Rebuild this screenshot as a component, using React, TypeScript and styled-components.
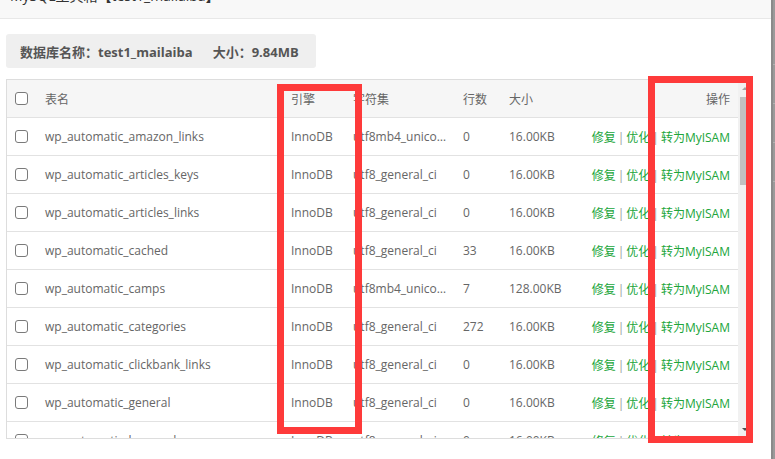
import React from 'react';
import styled, { createGlobalStyle } from 'styled-components';

type TableRow = {
  name: string;
  engine: string;
  charset: string;
  rows: number;
  size: string;
};

const data: TableRow[] = [
  { name: 'wp_automatic_amazon_links', engine: 'InnoDB', charset: 'utf8mb4_unicode_ci', rows: 0, size: '16.00KB' },
  { name: 'wp_automatic_articles_keys', engine: 'InnoDB', charset: 'utf8_general_ci', rows: 0, size: '16.00KB' },
  { name: 'wp_automatic_articles_links', engine: 'InnoDB', charset: 'utf8_general_ci', rows: 0, size: '16.00KB' },
  { name: 'wp_automatic_cached', engine: 'InnoDB', charset: 'utf8_general_ci', rows: 33, size: '16.00KB' },
  { name: 'wp_automatic_camps', engine: 'InnoDB', charset: 'utf8mb4_unicode_ci', rows: 7, size: '128.00KB' },
  { name: 'wp_automatic_categories', engine: 'InnoDB', charset: 'utf8_general_ci', rows: 272, size: '16.00KB' },
  { name: 'wp_automatic_clickbank_links', engine: 'InnoDB', charset: 'utf8_general_ci', rows: 0, size: '16.00KB' },
  { name: 'wp_automatic_general', engine: 'InnoDB', charset: 'utf8_general_ci', rows: 0, size: '16.00KB' },
  { name: 'wp_automatic_keywords', engine: 'InnoDB', charset: 'utf8_general_ci', rows: 0, size: '16.00KB' },
];

const GlobalStyle = createGlobalStyle`
  html, body {
    margin: 0;
    padding: 0;
  }
  body {
    font-family: "Open Sans", "Noto Sans CJK SC", sans-serif;
    background: #9a9a9a;
    overflow: hidden;
  }
`;

const App = () => {
  return (
    <>
      <GlobalStyle />
      <Page>
        <Dialog>
          <TitleBar>
            <TitleText>MySQL工具箱【test1_mailaiba】</TitleText>
          </TitleBar>
          <Body>
            <InfoBox>
              <span>数据库名称：test1_mailaiba</span>
              <InfoSize>大小：9.84MB</InfoSize>
            </InfoBox>
            <TableBox>
              <TableInner>
                <HeadRow>
                  <CheckCell><Checkbox /></CheckCell>
                  <Cell>表名</Cell>
                  <Cell>引擎</Cell>
                  <Cell>字符集</Cell>
                  <Cell>行数</Cell>
                  <Cell>大小</Cell>
                  <OpsCell $head>操作</OpsCell>
                </HeadRow>
                {data.map((r) => (
                  <Row key={r.name}>
                    <CheckCell><Checkbox /></CheckCell>
                    <Cell>{r.name}</Cell>
                    <Cell>{r.engine}</Cell>
                    <Cell>{r.charset}</Cell>
                    <Cell>{r.rows}</Cell>
                    <Cell>{r.size}</Cell>
                    <OpsCell>
                      <Link>修复</Link>
                      <Sep>|</Sep>
                      <Link>优化</Link>
                      <Sep>|</Sep>
                      <Link>转为MyISAM</Link>
                    </OpsCell>
                  </Row>
                ))}
              </TableInner>
              <Scrollbar>
                <ArrowBox><ArrowUp /></ArrowBox>
                <Track>
                  <Thumb />
                </Track>
                <ArrowBox><ArrowDown /></ArrowBox>
              </Scrollbar>
            </TableBox>
          </Body>
          <Mark $left={277} $top={84} $width={85} $height={350} />
          <Mark $left={648} $top={76} $width={105} $height={367} />
        </Dialog>
        <Backdrop>
          <BackLine />
          <BackLine />
          <BackLine />
          <BackLine />
        </Backdrop>
      </Page>
    </>
  );
};

const Page = styled.div`
  display: flex;
  height: 459px;
  overflow: hidden;
`;

const Dialog = styled.div`
  position: relative;
  width: 771px;
  flex-shrink: 0;
  background: #fff;
  display: flex;
  flex-direction: column;
`;

const TitleBar = styled.div`
  height: 18px;
  overflow: hidden;
  background: #f8f8f8;
  border-bottom: 1px solid #e8e8e8;
`;

const TitleText = styled.div`
  margin-top: -11px;
  padding-left: 10px;
  font-size: 14px;
  line-height: 14px;
  color: #333;
  white-space: nowrap;
`;

const Body = styled.div`
  padding: 15px 0 0 6px;
  display: flex;
  flex-direction: column;
`;

const InfoBox = styled.div`
  width: 310px;
  height: 34px;
  box-sizing: border-box;
  padding-left: 14px;
  display: flex;
  align-items: center;
  background: #efefef;
  border-radius: 3px;
  font-size: 13px;
  font-weight: 700;
  color: #555;
  white-space: nowrap;
`;

const InfoSize = styled.span`
  margin-left: 20px;
`;

const TableBox = styled.div`
  margin-top: 11px;
  width: 747px;
  height: 360px;
  box-sizing: border-box;
  border: 1px solid #ddd;
  display: flex;
  overflow: hidden;
`;

const TableInner = styled.div`
  flex: 1;
  display: flex;
  flex-direction: column;
  overflow: hidden;
`;

const Row = styled.div`
  display: grid;
  grid-template-columns: 30px 246px 62px 110px 46px 79px 1fr;
  height: 38px;
  flex-shrink: 0;
  box-sizing: border-box;
  border-bottom: 1px solid #e2e2e2;
  align-items: center;
  font-size: 12px;
  color: #666;
  background: #fff;
`;

const HeadRow = styled(Row)`
  background: #f6f6f6;
`;

const Cell = styled.div`
  padding: 0 8px;
  white-space: nowrap;
  overflow: hidden;
  text-overflow: ellipsis;
  min-width: 0;
`;

const CheckCell = styled.div`
  padding-left: 8px;
  display: flex;
  align-items: center;
`;

const OpsCell = styled.div<{ $head?: boolean }>`
  padding: 0 8px;
  white-space: nowrap;
  text-align: right;
  color: ${(p) => (p.$head ? '#666' : '#999')};
`;

const Link = styled.span`
  color: #20a53a;
  cursor: pointer;
`;

const Sep = styled.span`
  margin: 0 2px;
  color: #999;
`;

const Checkbox = styled.span`
  display: inline-block;
  width: 13px;
  height: 13px;
  box-sizing: border-box;
  border: 1px solid #7a7a7a;
  border-radius: 3px;
  background: #fff;
`;

const Scrollbar = styled.div`
  width: 14px;
  flex-shrink: 0;
  background: #f1f1f1;
  display: flex;
  flex-direction: column;
`;

const ArrowBox = styled.div`
  height: 17px;
  display: flex;
  align-items: center;
  justify-content: center;
`;

const ArrowUp = styled.span`
  width: 0;
  height: 0;
  border-left: 3px solid transparent;
  border-right: 3px solid transparent;
  border-bottom: 3px solid #a3a3a3;
`;

const ArrowDown = styled.span`
  width: 0;
  height: 0;
  border-left: 3px solid transparent;
  border-right: 3px solid transparent;
  border-top: 3px solid #505050;
`;

const Track = styled.div`
  flex: 1;
  padding: 0 2px;
`;

const Thumb = styled.div`
  height: 88px;
  background: #c1c1c1;
`;

const Mark = styled.div<{ $left: number; $top: number; $width: number; $height: number }>`
  position: absolute;
  left: ${(p) => p.$left}px;
  top: ${(p) => p.$top}px;
  width: ${(p) => p.$width}px;
  height: ${(p) => p.$height}px;
  box-sizing: border-box;
  border: 7px solid #fe3a3a;
  pointer-events: none;
`;

const Backdrop = styled.div`
  flex: 1;
  background: #9a9a9a;
  border-left: 2px solid #8a8a8a;
  display: flex;
  flex-direction: column;
  gap: 38px;
  padding-top: 64px;
`;

const BackLine = styled.div`
  height: 1px;
  background: #b0b0b0;
`;

export default App;
